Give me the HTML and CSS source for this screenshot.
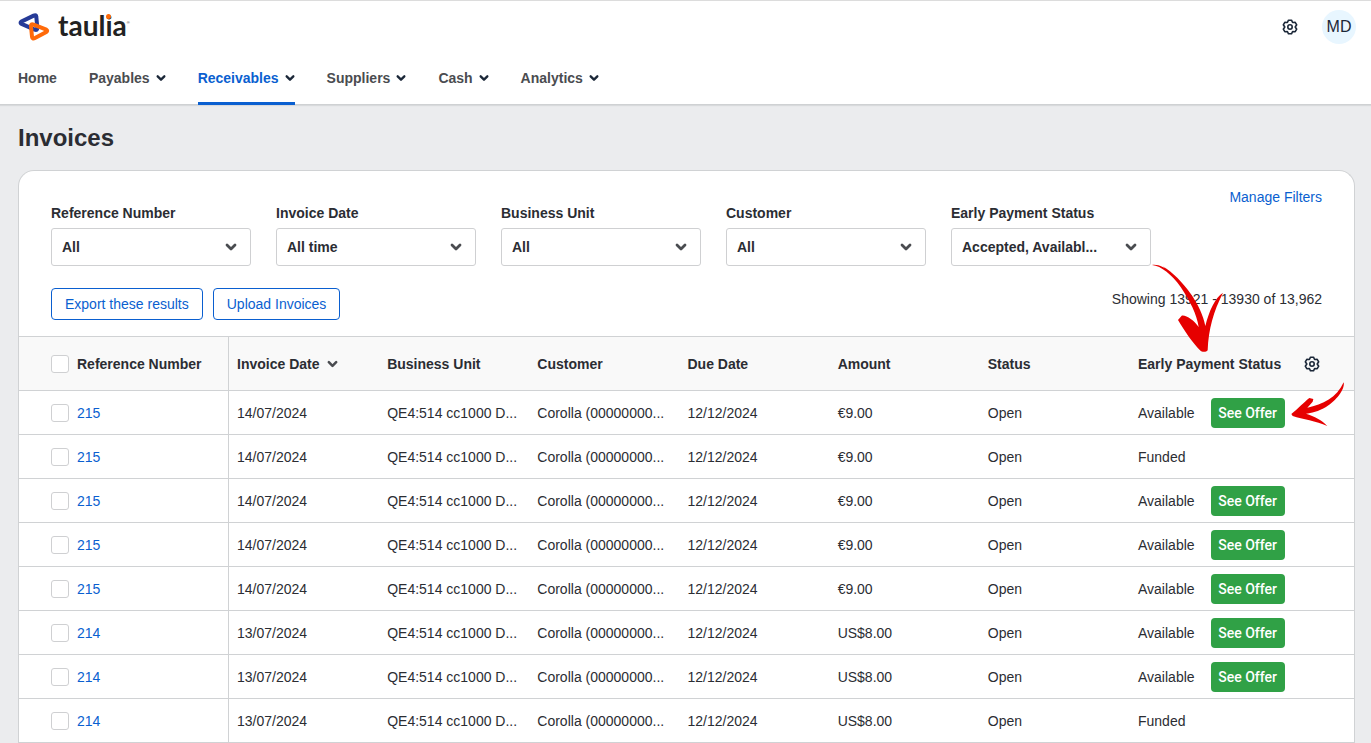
FILE: index.html
```html
<!DOCTYPE html>
<html lang="en">
<head>
    <meta charset="UTF-8">
    <meta name="viewport" content="width=device-width, initial-scale=1.0">
    <title>Invoices - Taulia</title>
    <link rel="stylesheet" href="styles.css">
</head>
<body>
    <!-- Shared icons -->
    <svg class="sprite" aria-hidden="true">
        <symbol id="chevron" viewBox="0 0 12 8">
            <path d="M2 2 L6 6 L10 2" fill="none" stroke="currentColor" stroke-width="2.8" stroke-linecap="round" stroke-linejoin="round"/>
        </symbol>
        <symbol id="gear" viewBox="0 0 16 16">
            <path d="M6.5 1.2 L9.5 1.2 L10.6 3.5 L13.2 3.3 L14.7 5.8 L13.2 8 L14.7 10.2 L13.2 12.7 L10.6 12.5 L9.5 14.8 L6.5 14.8 L5.4 12.5 L2.8 12.7 L1.3 10.2 L2.8 8 L1.3 5.8 L2.8 3.3 L5.4 3.5 Z" fill="none" stroke="currentColor" stroke-width="1.6" stroke-linejoin="round"/>
            <circle cx="8" cy="8" r="2.2" fill="none" stroke="currentColor" stroke-width="1.6"/>
        </symbol>
    </svg>

    <header class="topbar">
        <div class="brand-row">
            <a class="brand" href="#">
                <svg class="logo" viewBox="54 36 96 90" aria-hidden="true">
                    <path d="M63 71 Q60 68 64 65 L101 47 Q109 43 109 51 L112 84 Q112 92 104 89 Z" fill="none" stroke="#263b97" stroke-width="12" stroke-linejoin="round"/>
                    <path d="M93 79 Q92 70 101 74 L139 89 Q144 92 139 96 L105 114 Q97 118 96 110 Z" fill="none" stroke="#ff6a0a" stroke-width="12" stroke-linejoin="round"/>
                </svg>
                <span class="brand-name">taul<span class="brand-i">i</span>a</span><span class="brand-mark">&reg;</span>
            </a>
            <div class="account">
                <button class="icon-button" type="button" aria-label="Settings"><svg class="gear"><use href="#gear"/></svg></button>
                <button class="avatar" type="button">MD</button>
            </div>
        </div>
        <nav class="main-nav">
            <a href="#">Home</a>
            <a href="#">Payables <svg class="nav-chevron"><use href="#chevron"/></svg></a>
            <a class="active" href="#">Receivables <svg class="nav-chevron"><use href="#chevron"/></svg></a>
            <a href="#">Suppliers <svg class="nav-chevron"><use href="#chevron"/></svg></a>
            <a href="#">Cash <svg class="nav-chevron"><use href="#chevron"/></svg></a>
            <a href="#">Analytics <svg class="nav-chevron"><use href="#chevron"/></svg></a>
        </nav>
    </header>

    <main>
        <h1>Invoices</h1>
        <section class="card">
            <div class="filter-bar">
                <div class="filters">
                    <div class="filter">
                        <label for="f-ref">Reference Number</label>
                        <div class="select-box">
                            <select id="f-ref"><option>All</option></select>
                            <svg class="select-chevron"><use href="#chevron"/></svg>
                        </div>
                    </div>
                    <div class="filter">
                        <label for="f-date">Invoice Date</label>
                        <div class="select-box">
                            <select id="f-date"><option>All time</option></select>
                            <svg class="select-chevron"><use href="#chevron"/></svg>
                        </div>
                    </div>
                    <div class="filter">
                        <label for="f-unit">Business Unit</label>
                        <div class="select-box">
                            <select id="f-unit"><option>All</option></select>
                            <svg class="select-chevron"><use href="#chevron"/></svg>
                        </div>
                    </div>
                    <div class="filter">
                        <label for="f-customer">Customer</label>
                        <div class="select-box">
                            <select id="f-customer"><option>All</option></select>
                            <svg class="select-chevron"><use href="#chevron"/></svg>
                        </div>
                    </div>
                    <div class="filter">
                        <label for="f-status">Early Payment Status</label>
                        <div class="select-box">
                            <select id="f-status"><option>Accepted, Availabl...</option></select>
                            <svg class="select-chevron"><use href="#chevron"/></svg>
                        </div>
                    </div>
                </div>
                <a class="manage" href="#">Manage Filters</a>
            </div>

            <div class="actions">
                <button class="outline-button" type="button">Export these results</button>
                <button class="outline-button" type="button">Upload Invoices</button>
                <span class="count">Showing 13921 - 13930 of 13,962</span>
            </div>

            <table class="invoices">
                <colgroup>
                    <col class="col-ref">
                    <col span="6">
                    <col class="col-early">
                </colgroup>
                <thead>
                    <tr>
                        <th><div class="cell"><input type="checkbox" aria-label="Select all"> Reference Number</div></th>
                        <th><div class="cell">Invoice Date <svg class="sort-chevron"><use href="#chevron"/></svg></div></th>
                        <th>Business Unit</th>
                        <th>Customer</th>
                        <th>Due Date</th>
                        <th>Amount</th>
                        <th>Status</th>
                        <th><div class="cell spread">Early Payment Status <button class="icon-button" type="button" aria-label="Table settings"><svg class="gear"><use href="#gear"/></svg></button></div></th>
                    </tr>
                </thead>
                <tbody>
                    <tr>
                        <td><div class="cell"><input type="checkbox" aria-label="Select"> <a href="#">215</a></div></td>
                        <td>14/07/2024</td>
                        <td>QE4:514 cc1000 D...</td>
                        <td>Corolla (00000000...</td>
                        <td>12/12/2024</td>
                        <td>€9.00</td>
                        <td>Open</td>
                        <td><div class="cell offer">Available <button class="offer-button" type="button">See Offer</button></div></td>
                    </tr>
                    <tr>
                        <td><div class="cell"><input type="checkbox" aria-label="Select"> <a href="#">215</a></div></td>
                        <td>14/07/2024</td>
                        <td>QE4:514 cc1000 D...</td>
                        <td>Corolla (00000000...</td>
                        <td>12/12/2024</td>
                        <td>€9.00</td>
                        <td>Open</td>
                        <td>Funded</td>
                    </tr>
                    <tr>
                        <td><div class="cell"><input type="checkbox" aria-label="Select"> <a href="#">215</a></div></td>
                        <td>14/07/2024</td>
                        <td>QE4:514 cc1000 D...</td>
                        <td>Corolla (00000000...</td>
                        <td>12/12/2024</td>
                        <td>€9.00</td>
                        <td>Open</td>
                        <td><div class="cell offer">Available <button class="offer-button" type="button">See Offer</button></div></td>
                    </tr>
                    <tr>
                        <td><div class="cell"><input type="checkbox" aria-label="Select"> <a href="#">215</a></div></td>
                        <td>14/07/2024</td>
                        <td>QE4:514 cc1000 D...</td>
                        <td>Corolla (00000000...</td>
                        <td>12/12/2024</td>
                        <td>€9.00</td>
                        <td>Open</td>
                        <td><div class="cell offer">Available <button class="offer-button" type="button">See Offer</button></div></td>
                    </tr>
                    <tr>
                        <td><div class="cell"><input type="checkbox" aria-label="Select"> <a href="#">215</a></div></td>
                        <td>14/07/2024</td>
                        <td>QE4:514 cc1000 D...</td>
                        <td>Corolla (00000000...</td>
                        <td>12/12/2024</td>
                        <td>€9.00</td>
                        <td>Open</td>
                        <td><div class="cell offer">Available <button class="offer-button" type="button">See Offer</button></div></td>
                    </tr>
                    <tr>
                        <td><div class="cell"><input type="checkbox" aria-label="Select"> <a href="#">214</a></div></td>
                        <td>13/07/2024</td>
                        <td>QE4:514 cc1000 D...</td>
                        <td>Corolla (00000000...</td>
                        <td>12/12/2024</td>
                        <td>US$8.00</td>
                        <td>Open</td>
                        <td><div class="cell offer">Available <button class="offer-button" type="button">See Offer</button></div></td>
                    </tr>
                    <tr>
                        <td><div class="cell"><input type="checkbox" aria-label="Select"> <a href="#">214</a></div></td>
                        <td>13/07/2024</td>
                        <td>QE4:514 cc1000 D...</td>
                        <td>Corolla (00000000...</td>
                        <td>12/12/2024</td>
                        <td>US$8.00</td>
                        <td>Open</td>
                        <td><div class="cell offer">Available <button class="offer-button" type="button">See Offer</button></div></td>
                    </tr>
                    <tr>
                        <td><div class="cell"><input type="checkbox" aria-label="Select"> <a href="#">214</a></div></td>
                        <td>13/07/2024</td>
                        <td>QE4:514 cc1000 D...</td>
                        <td>Corolla (00000000...</td>
                        <td>12/12/2024</td>
                        <td>US$8.00</td>
                        <td>Open</td>
                        <td>Funded</td>
                    </tr>
                </tbody>
            </table>

            <!-- Red arrows pointing at the early payment column -->
            <svg class="arrows" viewBox="0 0 600 504" aria-hidden="true">
                <path d="M6 9 C34 12 66 38 92 75 C120 118 140 155 146 195 C132 175 108 158 95 161 L84 174 C104 208 130 245 150 265 C156 271 168 271 173 265 C176 200 190 150 219 92 C195 106 176 150 166 192 C155 130 100 52 38 12 C72 40 96 70 112 96 C80 42 42 4 6 9 Z"/>
                <path transform="translate(408 264)" d="M16 192 C35 178 55 155 70 144 L82 147 L80 155 L64 173 C110 165 153 142 173 97 C178 118 150 153 120 171 C98 184 75 190 60 191 C85 199 108 210 124 228 C90 213 50 208 20 198 Z"/>
            </svg>
        </section>
    </main>
</body>
</html>
```
FILE: styles.css
```css
* {
    box-sizing: border-box;
}

body {
    margin: 0;
    background-color: #ebecee;
    color: #2b2d33;
    font-family: "Liberation Sans", Arial, sans-serif;
    font-size: 14px;
    line-height: 20px;
}

a {
    color: #0a5fd0;
    text-decoration: none;
}

button, select, input {
    font: inherit;
    margin: 0;
}

button {
    cursor: pointer;
}

.sprite {
    display: none;
}

/* Header */
.topbar {
    background-color: white;
    border-top: 1px solid #dcdcdc;
    border-bottom: 1px solid #cfd1d3;
    box-shadow: 0 1px 1px #d8dadc;
    padding: 0 15px 0 18px;
}

.brand-row {
    display: flex;
    justify-content: space-between;
    align-items: center;
    height: 52px;
}

.brand {
    display: flex;
    align-items: center;
    color: #222;
}

.logo {
    width: 32px;
    height: 30px;
    margin-right: 8px;
}

.brand-name {
    padding-bottom: 4px;
    font-family: Lato, sans-serif;
    font-size: 28px;
    font-weight: bold;
    line-height: 30px;
}

.brand-i {
    position: relative;
}

/* orange dot over the i */
.brand-i::after {
    content: "";
    position: absolute;
    left: 1px;
    top: 6px;
    width: 5px;
    height: 5px;
    border-radius: 50%;
    background-color: #ff6a0a;
}

.brand-mark {
    padding-bottom: 8px;
    font-size: 4px;
    line-height: 8px;
}

.account {
    display: flex;
    align-items: center;
    gap: 24px;
}

.icon-button {
    display: flex;
    padding: 0;
    border: none;
    background: none;
    color: #1b2738;
}

.gear {
    width: 16px;
    height: 16px;
}

.avatar {
    width: 34px;
    height: 34px;
    padding: 0;
    border: none;
    border-radius: 50%;
    background-color: #e8f6ff;
    color: #1b2738;
    font-size: 16px;
}

.main-nav {
    display: flex;
    gap: 32px;
    margin-bottom: -1px;
}

.main-nav a {
    display: flex;
    align-items: center;
    gap: 6px;
    height: 52px;
    padding-top: 1px;
    border-bottom: 3px solid transparent;
    color: #4a4c50;
    font-weight: bold;
}

.main-nav .active {
    border-bottom-color: #0a5fd0;
    color: #0a5fd0;
}

.nav-chevron {
    width: 10px;
    height: 8px;
    color: #1b2738;
}

/* Page */
main {
    padding: 17px 16px 0 18px;
}

h1 {
    margin: 0 0 16px;
    font-size: 24px;
    line-height: 32px;
}

.card {
    position: relative;
    background-color: white;
    border: 1px solid #d0d2d4;
    border-bottom: none;
    border-radius: 16px 16px 0 0;
}

.filter-bar {
    display: flex;
    justify-content: space-between;
    padding: 16px 32px 22px;
}

.filters {
    display: flex;
    gap: 25px;
    padding-top: 16px;
}

.filter label {
    display: block;
    margin-bottom: 5px;
    font-weight: bold;
}

.select-box {
    display: grid;
    align-items: center;
    width: 200px;
}

.select-box select {
    grid-area: 1 / 1;
    width: 100%;
    height: 38px;
    padding: 0 40px 0 10px;
    appearance: none;
    border: 1px solid #cfd0d2;
    border-radius: 3px;
    background-color: white;
    color: inherit;
    font-weight: bold;
}

.select-chevron {
    grid-area: 1 / 1;
    justify-self: end;
    width: 12px;
    height: 8px;
    margin-right: 14px;
    color: #4a4c50;
    pointer-events: none;
}

.actions {
    display: flex;
    gap: 10px;
    padding: 0 32px 16px;
}

.outline-button {
    height: 32px;
    padding: 0 13px;
    border: 1px solid #0a5fd0;
    border-radius: 4px;
    background-color: white;
    color: #0a5fd0;
}

.count {
    margin-left: auto;
    line-height: 22px;
}

/* Table */
.invoices {
    width: 100%;
    table-layout: fixed;
    border-collapse: separate;
    border-spacing: 0;
}

.col-ref {
    width: 210px;
}

.col-early {
    width: 224px;
}

.invoices th, .invoices td {
    height: 44px;
    padding: 0 8px;
    border-bottom: 1px solid #d0d2d4;
    text-align: left;
    white-space: nowrap;
}

.invoices th {
    height: 55px;
    border-top: 1px solid #d0d2d4;
    background-color: #f9f9f9;
}

.invoices th:first-child, .invoices td:first-child {
    padding-left: 32px;
    border-right: 1px solid #d0d2d4;
}

.cell {
    display: flex;
    align-items: center;
    gap: 8px;
}

.spread {
    justify-content: space-between;
    padding-right: 26px;
}

.offer {
    gap: 16px;
}

.invoices input {
    width: 18px;
    height: 18px;
    appearance: none;
    border: 1px solid #cfd0d2;
    border-radius: 3px;
    background-color: white;
}

.sort-chevron {
    width: 11px;
    height: 8px;
    color: #4a4c50;
}

.offer-button {
    width: 74px;
    height: 30px;
    padding: 0;
    border: none;
    border-radius: 4px;
    background-color: #30a146;
    color: white;
    font-family: Roboto, sans-serif;
    font-weight: 500;
}

.arrows {
    position: absolute;
    top: 91px;
    right: 4px;
    width: 200px;
    height: 168px;
    fill: #e60000;
    pointer-events: none;
}
```
